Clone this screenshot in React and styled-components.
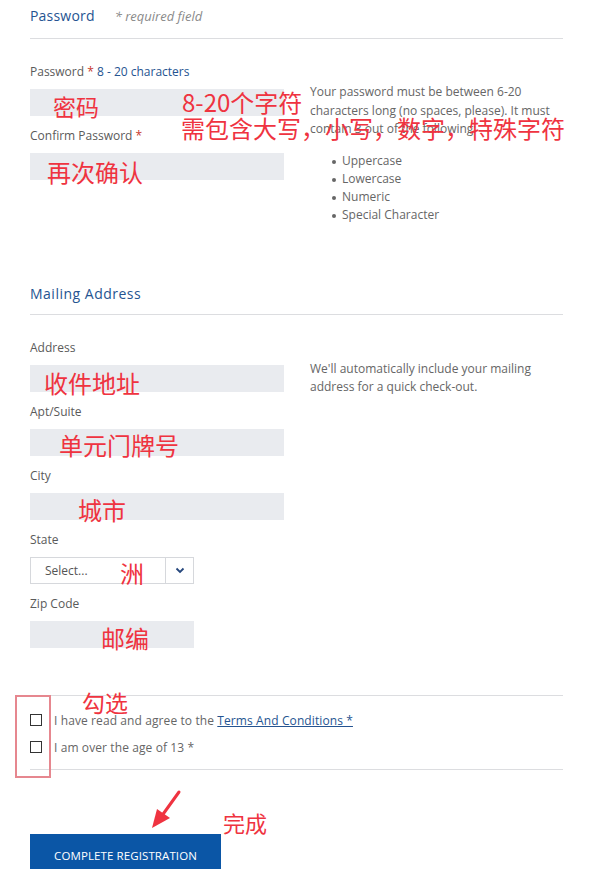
import React from "react";
import styled, { createGlobalStyle } from "styled-components";

const Global = createGlobalStyle`
  html, body { margin: 0; padding: 0; background: #fff; }
  body { font-family: "Open Sans", "Noto Sans", sans-serif; }
  * { box-sizing: border-box; }
`;

const Page = styled.div`
  position: relative;
  width: 601px;
  padding: 0 38px 0 30px;
`;

const Section = styled.section`
  display: flex;
  flex-direction: column;
`;

const SectionHead = styled.div`
  display: flex;
  align-items: center;
  gap: 20px;
  height: 39px;
  padding-bottom: ${(p) => (p.$pb != null ? p.$pb : 7)}px;
  margin-top: ${(p) => p.$top || 0}px;
  border-bottom: 1px solid #dcdde0;
  margin-bottom: 25px;
`;

const SectionTitle = styled.h2`
  margin: 0;
  font-size: 14px;
  font-weight: 400;
  color: #255491;
  letter-spacing: ${(p) => p.$ls || 0.2}px;
`;

const Required = styled.span`
  font-size: 13px;
  font-style: italic;
  color: #8a8a8a;
`;

const Columns = styled.div`
  display: grid;
  grid-template-columns: 254px 1fr;
  column-gap: 26px;
`;

const Fields = styled.div`
  display: flex;
  flex-direction: column;
`;

const Field = styled.div`
  display: flex;
  flex-direction: column;
  margin-bottom: 12px;
`;

const Label = styled.label`
  font-size: 12px;
  line-height: 16px;
  color: #5a5a5a;
  margin-bottom: 9px;
`;

const Star = styled.span`
  color: #c8372d;
`;

const Hint = styled.span`
  color: #255491;
`;

const Input = styled.div`
  height: 27px;
  width: ${(p) => p.$w || 254}px;
  background: #e9ebef;
`;

const Select = styled.div`
  height: 27px;
  width: 164px;
  display: flex;
  border: 1px solid #d6d8dc;
  background: #fff;
`;

const SelectText = styled.div`
  flex: 1;
  display: flex;
  align-items: center;
  padding-left: 14px;
  font-size: 12px;
  color: #555;
  border-right: 1px solid #d6d8dc;
`;

const SelectArrow = styled.div`
  width: 27px;
  display: flex;
  align-items: center;
  justify-content: center;
`;

const Aside = styled.div`
  padding-top: ${(p) => p.$top || 19}px;
  font-size: 12px;
  line-height: 18.5px;
  color: #666;
`;

const AsideText = styled.p`
  margin: 0;
`;

const Bullets = styled.ul`
  margin: 13px 0 0;
  padding-left: 32px;
  list-style: none;
  li {
    position: relative;
    line-height: 18.3px;
  }
  li::before {
    content: "";
    position: absolute;
    left: -10px;
    top: 8px;
    width: 4px;
    height: 4px;
    border-radius: 50%;
    background: #666;
  }
`;

const Agree = styled.div`
  margin-top: 35px;
  border-top: 1px solid #dcdde0;
  border-bottom: 1px solid #dcdde0;
  padding: 18px 0 15px;
  display: flex;
  flex-direction: column;
  gap: 14px;
`;

const CheckRow = styled.div`
  display: flex;
  align-items: center;
  gap: 12px;
  font-size: 12px;
  letter-spacing: 0.1px;
  color: #666;
  height: 13px;
`;

const Box = styled.span`
  width: 12px;
  height: 12px;
  border: 1px solid #333;
  background: #fff;
`;

const Link = styled.a`
  color: #255491;
  text-decoration: underline;
`;

const Button = styled.button`
  margin-top: 64px;
  width: 191px;
  height: 44px;
  border: 0;
  background: #0b56a6;
  color: #fff;
  font-family: "Open Sans", sans-serif;
  font-size: 11.5px;
  letter-spacing: 0.1px;
`;

const Note = styled.div`
  position: absolute;
  left: ${(p) => p.$x}px;
  top: ${(p) => p.$y}px;
  font-family: "Noto Sans CJK SC", sans-serif;
  font-size: ${(p) => p.$s || 24}px;
  line-height: 1;
  color: #ef3340;
  white-space: nowrap;
  pointer-events: none;
`;

const NoteBox = styled.div`
  position: absolute;
  left: 15px;
  top: 695px;
  width: 36px;
  height: 83px;
  border: 2px solid #e6878f;
`;

const Arrow = styled.svg`
  position: absolute;
  left: 140px;
  top: 785px;
`;

const Chevron = () => (
  <svg width="10" height="7" viewBox="0 0 10 7">
    <path d="M1.5 1.5 L5 5 L8.5 1.5" fill="none" stroke="#25467c" strokeWidth="1.8" />
  </svg>
);

export default function App() {
  return (
    <Page>
      <Global />
      <Section>
        <SectionHead>
          <SectionTitle>Password</SectionTitle>
          <Required>* required field</Required>
        </SectionHead>
        <Columns>
          <Fields>
            <Field>
              <Label>
                Password <Star>*</Star> <Hint>8 - 20 characters</Hint>
              </Label>
              <Input />
            </Field>
            <Field>
              <Label>
                Confirm Password <Star>*</Star>
              </Label>
              <Input />
            </Field>
          </Fields>
          <Aside>
            <AsideText>
              Your password must be between 6-20 characters long (no spaces, please). It must contain 3 out of the following:
            </AsideText>
            <Bullets>
              <li>Uppercase</li>
              <li>Lowercase</li>
              <li>Numeric</li>
              <li>Special Character</li>
            </Bullets>
          </Aside>
        </Columns>
      </Section>

      <Section>
        <SectionHead $top={51} $pb={3}>
          <SectionTitle $ls={0.5}>Mailing Address</SectionTitle>
        </SectionHead>
        <Columns>
          <Fields>
            <Field>
              <Label>Address</Label>
              <Input />
            </Field>
            <Field>
              <Label>Apt/Suite</Label>
              <Input />
            </Field>
            <Field>
              <Label>City</Label>
              <Input />
            </Field>
            <Field>
              <Label>State</Label>
              <Select>
                <SelectText>Select...</SelectText>
                <SelectArrow>
                  <Chevron />
                </SelectArrow>
              </Select>
            </Field>
            <Field>
              <Label>Zip Code</Label>
              <Input $w={164} />
            </Field>
          </Fields>
          <Aside $top={20}>
            <AsideText>We'll automatically include your mailing address for a quick check-out.</AsideText>
          </Aside>
        </Columns>
      </Section>

      <Agree>
        <CheckRow>
          <Box />
          <span>
            I have read and agree to the <Link>Terms And Conditions *</Link>
          </span>
        </CheckRow>
        <CheckRow>
          <Box />
          <span>I am over the age of 13 *</span>
        </CheckRow>
      </Agree>

      <Button>COMPLETE REGISTRATION</Button>

      <Note $x={53} $y={95} $s={23}>密码</Note>
      <Note $x={182} $y={90}>8-20个字符</Note>
      <Note $x={181} $y={116}>需包含大写，小写，数字，特殊字符</Note>
      <Note $x={47} $y={160}>再次确认</Note>
      <Note $x={44} $y={371}>收件地址</Note>
      <Note $x={59} $y={433}>单元门牌号</Note>
      <Note $x={78} $y={498}>城市</Note>
      <Note $x={120} $y={561}>洲</Note>
      <Note $x={101} $y={626}>邮编</Note>
      <Note $x={82} $y={691} $s={23}>勾选</Note>
      <Note $x={223} $y={811} $s={22}>完成</Note>
      <NoteBox />
      <Arrow width="50" height="50" viewBox="0 0 50 50">
        <path d="M39 7 L21 32" stroke="#ef3340" strokeWidth="3" strokeLinecap="round" />
        <path d="M12 43 L17 24 L30 33 Z" fill="#ef3340" />
      </Arrow>
    </Page>
  );
}
